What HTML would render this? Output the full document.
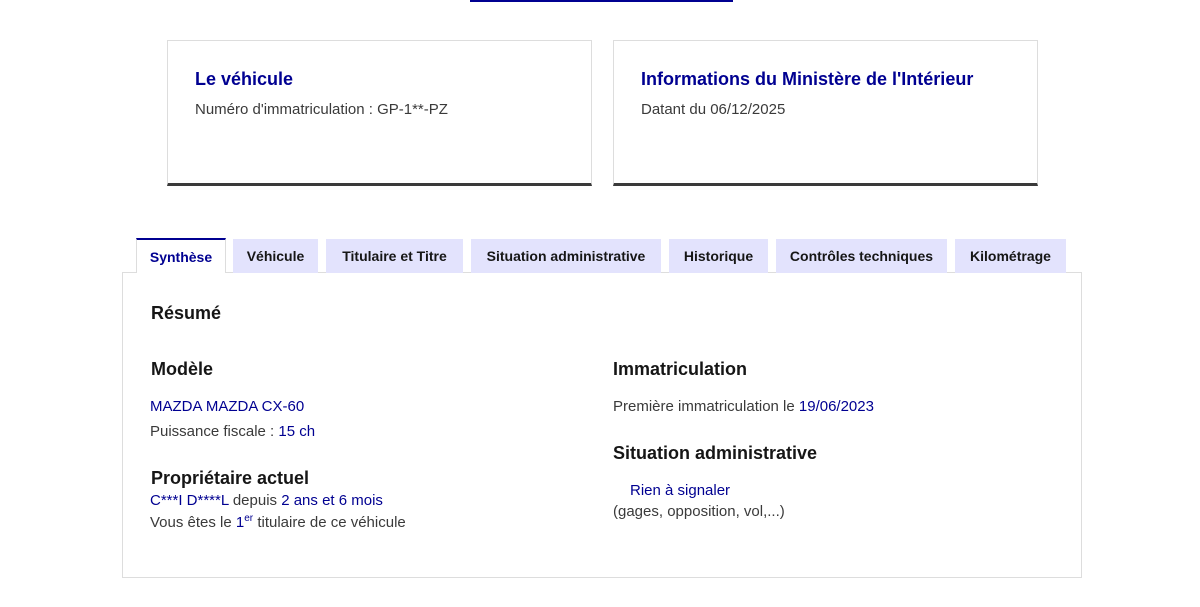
<!DOCTYPE html><html><head><meta charset="utf-8"><style>
body{margin:0;width:1200px;height:607px;background:#fff;font-family:"Liberation Sans",sans-serif;color:#3a3a3a;position:relative;overflow:hidden}
.a{position:absolute}
.card{position:absolute;top:40px;height:142px;border:1px solid #ddd;border-bottom:3px solid #3a3a3a;box-sizing:content-box}
.card h3{margin:0;position:absolute;left:27px;top:28px;font-size:18px;color:#000091;font-weight:bold}
.card p{margin:0;position:absolute;left:27px;top:60px;font-size:15px}
.tab{position:absolute;top:239px;height:34px;background:#e3e3fd;font-size:14px;font-weight:bold;color:#161616;text-align:center;line-height:34px}
.b{color:#000091}
h4{margin:0;position:absolute;font-size:18px;color:#161616}
.t{position:absolute;font-size:15px}
</style></head><body>
<div class="a" style="left:470px;top:0;width:263px;height:2px;background:#000091"></div>
<div class="card" style="left:167px;width:423px"><h3>Le véhicule</h3><p>Numéro d'immatriculation : GP-1**-PZ</p></div>
<div class="card" style="left:613px;width:423px"><h3>Informations du Ministère de l'Intérieur</h3><p>Datant du 06/12/2025</p></div>
<div class="a" style="left:122px;top:272px;width:958px;height:304px;border:1px solid #ddd"></div>
<div class="tab" style="left:136px;width:88px;background:#fff;color:#000091;border-top:2px solid #000091;border-left:1px solid #ddd;border-right:1px solid #ddd;height:33px;top:238px;z-index:2">Synthèse</div>
<div class="tab" style="left:233px;width:85px">Véhicule</div>
<div class="tab" style="left:326px;width:137px">Titulaire et Titre</div>
<div class="tab" style="left:471px;width:190px">Situation administrative</div>
<div class="tab" style="left:669px;width:99px">Historique</div>
<div class="tab" style="left:776px;width:171px">Contrôles techniques</div>
<div class="tab" style="left:955px;width:111px">Kilométrage</div>
<h4 style="left:151px;top:303px">Résumé</h4>
<h4 style="left:151px;top:359px">Modèle</h4>
<div class="t b" style="left:150px;top:398px">MAZDA MAZDA CX-60</div>
<div class="t" style="left:150px;top:423px">Puissance fiscale : <span class="b">15 ch</span></div>
<h4 style="left:151px;top:468px">Propriétaire actuel</h4>
<div class="t" style="left:150px;top:492px"><span class="b">C***I D****L</span> depuis <span class="b">2 ans et 6 mois</span></div>
<div class="t" style="left:150px;top:513px">Vous êtes le <span class="b">1<sup style="font-size:10px">er</sup></span> titulaire de ce véhicule</div>
<h4 style="left:613px;top:359px">Immatriculation</h4>
<div class="t" style="left:613px;top:398px">Première immatriculation le <span class="b">19/06/2023</span></div>
<h4 style="left:613px;top:443px">Situation administrative</h4>
<div class="t b" style="left:630px;top:482px">Rien à signaler</div>
<div class="t" style="left:613px;top:503px">(gages, opposition, vol,...)</div>
</body></html>
